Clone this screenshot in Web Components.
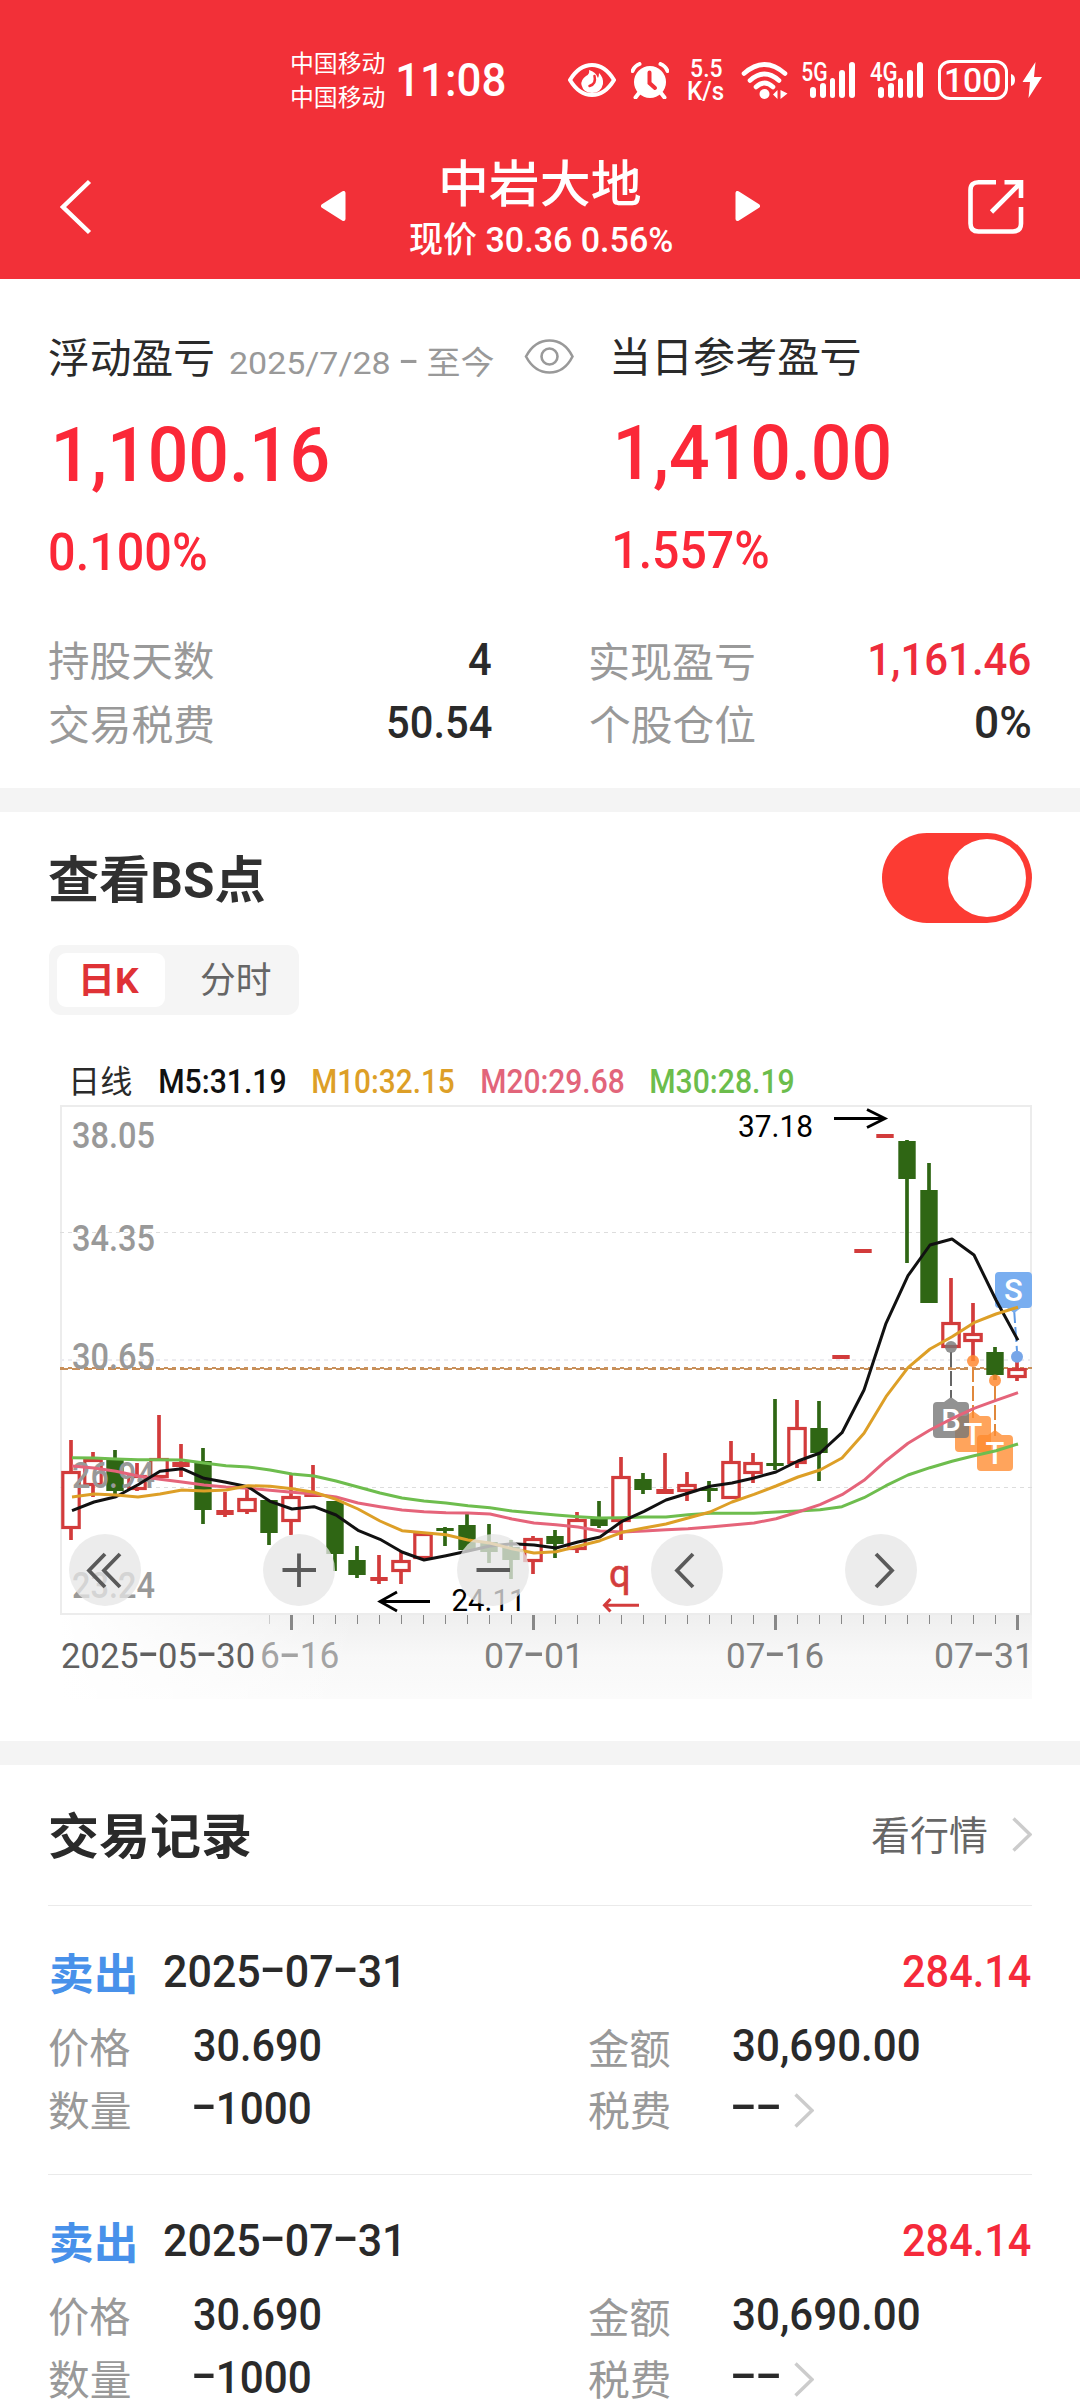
<!DOCTYPE html>
<html lang="zh-CN">
<head>
<meta charset="utf-8">
<title>中岩大地</title>
<style>
html,body{margin:0;padding:0}
body{width:1080px;height:2400px;overflow:hidden;background:#fff;font-family:Roboto,"Noto Sans CJK SC",sans-serif;color:#2a2a2a}
</style>
</head>
<body>
<stock-page></stock-page>
<script>
const FAMILY = 'Roboto, "Noto Sans CJK SC", sans-serif';
const ctx = document.createElement('canvas').getContext('2d');
const DASH = 1.95;

function define(name, html, after) {
  const t = document.createElement('template');
  t.innerHTML = html;
  customElements.define(name, class extends HTMLElement {
    connectedCallback() {
      if (this.shadowRoot) return;
      const root = this.attachShadow({mode: 'open'});
      root.appendChild(t.content.cloneNode(true));
      if (after) after(this, root);
    }
  });
}

/* Text whose glyph box is exactly w by h pixels; commas and slashes may hang below it. */
define('fit-text', `
<style>
:host{display:block;flex:none;font-weight:400}
span{display:inline-block;white-space:nowrap;transform-origin:0 0}
::slotted(i){font-style:normal;font-weight:300;font-size:1.95em;line-height:0;vertical-align:-.12em}
</style><span><slot></slot></span>`, (el, root) => {
  const w = +el.getAttribute('w'), h = +el.getAttribute('h');
  const text = el.textContent.trim();
  const weight = getComputedStyle(el).fontWeight;
  const ref = (text === 'K/s' ? text : text.replace(/[-,/]/g, '')).trim() || '0';
  if (text.includes('-')) el.innerHTML = text.replace(/-/g, '<i>-</i>');
  ctx.font = `${weight} 100px ${FAMILY}`;
  let m = ctx.measureText(ref);
  const size = h / (m.actualBoundingBoxAscent + m.actualBoundingBoxDescent) * 100;
  const span = root.querySelector('span');
  el.style.width = w + 'px';
  el.style.height = h + 'px';
  span.style.fontSize = size + 'px';
  span.style.lineHeight = h + 'px';
  const adv = span.getBoundingClientRect().width;
  ctx.font = `${weight} ${size}px ${FAMILY}`;
  m = ctx.measureText(ref);
  const first = text[0], last = text[text.length - 1];
  const f = ctx.measureText(first), l = ctx.measureText(last);
  const lsb = -f.actualBoundingBoxLeft * (first === '-' ? DASH : 1);
  const rsb = (l.width - l.actualBoundingBoxRight) * (last === '-' ? DASH : 1);
  const s = w / (adv - lsb - rsb);
  const r = ctx.measureText('0');
  const A = Math.round(r.fontBoundingBoxAscent), D = Math.round(r.fontBoundingBoxDescent);
  const base = (h - (A + D)) / 2 + A;
  span.style.transform = `translate(${-lsb * s}px,${m.actualBoundingBoxAscent - base}px) scaleX(${s})`;
});

define('chevron-right', `
<style>:host{display:block;flex:none;width:20px;height:35px}svg{display:block}</style>
<svg width="20" height="35"><path d="M1.5 1.5L18 17.5L1.5 33.5" fill="none" stroke="#ccc" stroke-width="3.4"/></svg>`);

define('signal-bars', `
<style>
:host{display:flex;position:relative;align-items:flex-end;width:45px;height:36px;gap:4px;flex:none;justify-content:flex-end}
i{width:5.8px;border-radius:3px;background:#fff}
i:nth-of-type(1){height:11px}i:nth-of-type(2){height:15px}i:nth-of-type(3){height:20px}i:nth-of-type(4){height:28px}i:nth-of-type(5){height:36px}
::slotted(*){position:absolute;left:-8px;top:0}
</style><slot></slot><i></i><i></i><i></i><i></i><i></i>`);

define('status-bar', `
<style>
:host{display:flex;align-items:center;height:160px;padding-left:292px;box-sizing:border-box;color:#fff}
.col{display:flex;flex-direction:column;flex:none}
svg{display:block;flex:none}
fit-text{font-weight:500}
.bat{display:flex;align-items:center;justify-content:center;width:70px;height:40px;border:3px solid #fff;border-radius:12px;box-sizing:border-box;flex:none}
</style>
<div class="col" style="gap:12px;margin-top:-3px"><fit-text w="93" h="22" style="font-weight:400">中国移动</fit-text><fit-text w="93" h="22" style="font-weight:400">中国移动</fit-text></div>
<fit-text w="107" h="34.5" style="margin-left:13px">11:08</fit-text>
<svg width="48" height="34" viewBox="0 0 48 34" style="margin-left:63px"><path d="M2 17Q11 2 24 2Q37 2 46 17Q37 32 24 32Q11 32 2 17Z" fill="none" stroke="#fff" stroke-width="4"/><path d="M21 7Q22 11 18 13Q12.500 17 13.500 22Q15.500 30 24 30Q33 30 35 21Q35.500 14 31 10Q31 13 30 15Q28 9 21 7Z" fill="#fff"/><path d="M26.500 13Q28.500 21 21.500 23" fill="none" stroke="#f23038" stroke-width="2.500" stroke-linecap="round"/></svg>
<svg width="38" height="37" viewBox="0 0 38 37" style="margin-left:15px"><circle cx="19" cy="20" r="16" fill="#fff"/><path d="M1.5 9Q3.500 4 8.500 2M36.500 9Q34.500 4 29.500 2M8 31L4.500 35.500M30 31L33.500 35.500" stroke="#fff" stroke-width="4" stroke-linecap="round" fill="none"/><path d="M18.500 10.500V21L24 26" stroke="#f23038" stroke-width="4" stroke-linecap="round" fill="none"/></svg>
<div class="col" style="margin-left:19px;gap:3px;align-items:center"><fit-text w="31" h="18.500">5.5</fit-text><fit-text w="36" h="20">K/s</fit-text></div>
<svg width="47" height="37" viewBox="0 0 47 37" style="margin-left:17px"><g fill="none" stroke="#fff" stroke-width="4.600" stroke-linecap="round"><path d="M3 11.500Q23.500 -6.500 44 11.500"/><path d="M9 18.500Q23.500 5.500 38 18.500"/><path d="M15 25Q23.500 17 32 25"/></g><circle cx="23.500" cy="32" r="5" fill="#fff"/><path d="M36.500 28L32 32.500L36.500 37zM39.500 28l7 3.500l-7 5.500z" fill="#fff"/></svg>
<signal-bars style="margin-left:22px"><fit-text w="25" h="19">5G</fit-text></signal-bars>
<signal-bars style="margin-left:23px"><fit-text w="27" h="19">4G</fit-text></signal-bars>
<div class="bat" style="margin-left:15px"><fit-text w="54" h="24">100</fit-text></div>
<svg width="35" height="38" viewBox="0 0 35 38" style="margin-left:3px"><path d="M0 13Q4 14 4 19Q4 24 0 25Z" fill="#fff"/><path d="M24.500 1L11.500 21H19L17.500 37L31 16H23Z" fill="#fff"/></svg>`);

define('nav-bar', `
<style>
:host{display:flex;height:119px;box-sizing:border-box;padding:0 57px 0 60px;color:#fff}
svg{display:block;flex:none}
.t{display:flex;flex-direction:column;align-items:center;width:262px;margin-left:64px;margin-top:-1px}
fit-text{font-weight:500}
</style>
<svg width="32" height="56" style="margin-top:19px"><path d="M29.500 2.500L3 28L29.500 53.500" fill="none" stroke="#fff" stroke-width="4.500"/></svg>
<svg width="25" height="30" style="margin-left:229px;margin-top:31px"><path d="M22.500 2V28L2 15Z" fill="#fff" stroke="#fff" stroke-width="4" stroke-linejoin="round"/></svg>
<div class="t"><fit-text w="198" h="48">中岩大地</fit-text><fit-text w="262" h="34" style="margin-top:15px">现价 30.36 0.56%</fit-text></div>
<svg width="25" height="30" style="margin-left:63px;margin-top:31px"><path d="M2.500 2V28L23 15Z" fill="#fff" stroke="#fff" stroke-width="4" stroke-linejoin="round"/></svg>
<svg width="56" height="56" style="margin-left:208px;margin-top:19px"><path d="M28 3.300H10.500Q2.500 3.300 2.500 11V44.500Q2.500 52.500 10.500 52.500H45Q53 52.500 53 44.500V28M36.500 3.300H53V19M52 4.500L23.500 33" fill="none" stroke="#fff" stroke-width="4.600"/></svg>`);

define('stat-pair', `
<style>
:host{display:flex;justify-content:space-between;height:63px}
::slotted([slot=label]){color:#999}
::slotted([slot=value]){font-weight:500;margin-top:2px}
</style><slot name="label"></slot><slot name="value"></slot>`);

define('profit-summary', `
<style>
:host{display:block;height:509px;box-sizing:border-box;padding:57px 49px 0}
.cols{display:flex;height:304.500px}
.l{width:564px}.r{flex:1}
.h{display:flex;align-items:flex-start;height:90px}
.red{color:#fb2838;font-weight:500}
.grid{display:grid;grid-template-columns:442px 440px;column-gap:99px}
</style>
<div class="cols">
 <div class="l"><div class="h"><fit-text w="164" h="38.500" style="margin-top:1.500px">浮动盈亏</fit-text><fit-text w="264" h="30" style="margin:9.500px 0 0 17px;color:#999">2025/7/28 - 至今</fit-text>
 <svg width="50" height="38" style="margin-left:30px;margin-top:2px"><path d="M2 18.500Q10.500 2.500 25.500 2.500Q40.500 2.500 48.500 18.500Q40.500 34.500 25.500 34.500Q10.500 34.500 2 18.500Z" fill="none" stroke="#999" stroke-width="2.600"/><circle cx="25.500" cy="18.500" r="8" fill="none" stroke="#999" stroke-width="2.600"/></svg></div>
 <fit-text class="red" w="272" h="56.500" style="margin-left:7px">1,100.16</fit-text><fit-text class="red" w="156" h="38" style="margin:49.500px 0 0 1px">0.100%</fit-text></div>
 <div class="r"><div class="h" style="height:87.500px"><fit-text w="247" h="39">当日参考盈亏</fit-text></div>
 <fit-text class="red" w="271" h="56.500" style="margin-left:4.500px">1,410.00</fit-text><fit-text class="red" w="153" h="38" style="margin:49.500px 0 0 2px">1.557%</fit-text></div>
</div>
<div class="grid">
 <stat-pair><fit-text slot="label" w="164.500" h="38.500">持股天数</fit-text><fit-text slot="value" w="22.500" h="32">4</fit-text></stat-pair>
 <stat-pair><fit-text slot="label" w="164.500" h="38.500">实现盈亏</fit-text><fit-text slot="value" w="160" h="32.500" style="color:#ee2c3c">1,161.46</fit-text></stat-pair>
 <stat-pair><fit-text slot="label" w="164.500" h="38.500">交易税费</fit-text><fit-text slot="value" w="103.500" h="32.500">50.54</fit-text></stat-pair>
 <stat-pair><fit-text slot="label" w="164.500" h="38.500">个股仓位</fit-text><fit-text slot="value" w="54" h="33">0%</fit-text></stat-pair>
</div>`);

define('toggle-switch', `
<style>:host{display:flex;justify-content:flex-end;align-items:center;width:150px;height:90px;margin-top:1px;border-radius:45px;background:#fc3b33;box-sizing:border-box;padding-right:6px}
b{width:78px;height:78px;border-radius:50%;background:#fff}</style><b></b>`);

define('segment-tabs', `
<style>:host{display:flex;width:250px;height:70px;box-sizing:border-box;padding:8px;background:#f5f5f5;border-radius:12px}
div{display:flex;flex:none;align-items:center;justify-content:center;width:108px;height:54px;border-radius:9px}
.on{background:#fff;color:#df3236;font-weight:700}.on fit-text{font-weight:700}
.off{width:142px;color:#666}</style>
<div class="on"><fit-text w="57" h="32">日K</fit-text></div><div class="off"><fit-text w="69.500" h="33.500">分时</fit-text></div>`);

/* One row per trading day: up flag, high, body top, body bottom, low. */
const K = [[1,335,366,424,435],[1,347,354,381,392],[0,345,355,386,389],[1,358,370,385,386],[1,310,353,373,373],[1,339,357,362,372],[0,343,356,405,419],[1,387,405,410,412],[1,383,393,407,409],[0,395,395,428,440],[1,370,391,417,430],[1,360,389,392,392],[0,396,396,449,466],[0,441,455,470,473],[1,450,472,476,479],[1,447,455,467,479],[1,428,428,454,454],[0,422,423,426,441],[0,409,420,445,447],[0,419,437,447,458],[0,435,442,455,474],[1,431,433,457,469],[0,425,431,439,453],[1,407,414,445,448],[0,396,412,421,423],[1,352,371,417,435],[0,368,374,385,389],[1,348,384,389,389],[1,367,379,387,396],[0,376,383,386,397],[1,336,356,394,394],[1,348,357,369,378],[0,294,358,361,365],[1,295,322,359,363],[0,296,323,348,376],[1,250,250,254,254],[1,144,144,148,148],[1,29,29,33,33],[0,35,36,74,158],[0,58,85,198,198],[1,173,217,243,243],[1,198,228,237,256],[0,242,247,270,275],[1,252,263,273,276]];
const MA = {
 '#6ebd4e':[352.7,353,354,354.7,354.7,355,358,360.7,362,365,369,371,376,382,388,393,396,398,400.7,402.7,406,408,410,411.7,413,412.7,412,412,409.7,408.3,408.3,408.3,407,406,404.7,401.7,392.7,380.7,370,362.7,356.3,350.7,345.7,339],
 '#e5647a':[361,363,366.3,371,374.3,377,380,382,383.3,385.3,387.3,389,392,398,401.7,405,406.7,407.7,408,409,414,418,419.7,422,426,427,426,424.7,423.7,422,420,418,413.7,407,399.7,389.7,375.3,355.7,338.3,325,313.7,303.3,295.3,287.7],
 '#111':[405.7,397,391.7,379.7,366.3,363.7,373.3,377.3,381.7,396.3,404,401.7,410,425.3,434.3,447,455,450.7,446,441,438.7,440,443,437,432,416.3,406.3,395,388.3,381.3,378,373,367,356,348,327.7,285,218.3,170.7,140,134,150,195,235.3],
 '#dd9f27':[392,389,390,392,389,385,386,385,380.7,381.3,383.7,387.3,394.3,404,416,425.7,427.7,429.7,435,438,443.7,448,446.7,441.3,435.7,427.3,423,419,413,407,397,389.3,381,372,365,353,328.3,291.7,262.7,244,231.7,217.7,209,202.3]};

define('k-chart', `
<style>:host{display:block;width:972px;height:510px}svg{display:block;overflow:visible;font-family:Roboto,"Noto Sans CJK SC",sans-serif}</style>
<svg width="972" height="510" viewBox="0 0 972 510">
<rect x="1" y="1" width="970" height="508" fill="#fff" stroke="#ececec" stroke-width="2"/>
<g stroke="#ddd" stroke-dasharray="4 4"><path d="M0 127.500H972M0 382.500H972"/><path d="M0 255H972" stroke="#ececf0" stroke-width="2"/></g>
<path d="M0 263H972" stroke="#c8905a" stroke-width="2" stroke-dasharray="4 4"/><path d="M0 264H972" stroke="#c8905a" stroke-width="2" stroke-dasharray="8 4"/>
<g id="k"></g>
<g font-size="36.500" font-weight="500" fill="#999">
<text x="12" y="43.300" textLength="83" lengthAdjust="spacingAndGlyphs">38.05</text><text x="12" y="145.500" textLength="83" lengthAdjust="spacingAndGlyphs">34.35</text><text x="12" y="263.500" textLength="83" lengthAdjust="spacingAndGlyphs">30.65</text><text x="12" y="383" textLength="83" lengthAdjust="spacingAndGlyphs">26.94</text><text x="12" y="492.500" textLength="83" lengthAdjust="spacingAndGlyphs">23.24</text></g>
<g font-size="31.500" fill="#000"><text x="678" y="31.500" textLength="75" lengthAdjust="spacingAndGlyphs">37.18</text><text x="391.500" y="506" textLength="74" lengthAdjust="spacingAndGlyphs">24.11</text></g>
<path d="M774 13.500H825M807 4.500L825 13.500L807 22.500M370 496.500H320M337 487L320 496.500L337 506" fill="none" stroke="#000" stroke-width="2.800"/>
<text x="549" y="482" font-size="38" fill="#d33c3c" stroke="#d33c3c" stroke-width=".6">q</text><path d="M579 500.300H545M550.500 494L544.500 500.300L550.500 506.500" fill="none" stroke="#d33c3c" stroke-width="3"/>
<g fill="none" stroke-width="2" stroke-dasharray="15 4"><path d="M954 203L957 246" stroke="#5f9be6"/><path d="M891 247V293" stroke="#666"/><path d="M913 262V313M935 281V331" stroke="#e0883c"/></g>
<circle cx="957" cy="251.700" r="6" fill="#77a6e8"/><circle cx="891" cy="242" r="6" fill="#777" fill-opacity=".8"/><circle cx="913" cy="256" r="6" fill="#ff8a32" fill-opacity=".85"/><circle cx="935" cy="275.500" r="6" fill="#ff8a32" fill-opacity=".85"/>
<g text-anchor="middle" font-size="31" font-weight="500"><g fill="#ff8a2e" fill-opacity=".78"><path d="M899 311H906L913 306L920 311H927Q931 311 931 315V343Q931 347 927 347H899Q895 347 895 343V315Q895 311 899 311Z"/><path d="M921 330H928L935 325L942 330H949Q953 330 953 334V362Q953 366 949 366H921Q917 366 917 362V334Q917 330 921 330Z"/></g>
<path d="M877 297H884L891 292L898 297H905Q909 297 909 301V329Q909 333 905 333H877Q873 333 873 329V301Q873 297 877 297Z" fill="#777" fill-opacity=".8"/>
<path d="M939 167H968Q972 167 972 171V199Q972 203 968 203H961L954 208L947 203H939Q935 203 935 199V171Q935 167 939 167Z" fill="#79aef0"/>
<g fill="#fff"><text x="953.500" y="196">S</text><text x="891" y="326">B</text><text x="913" y="340">T</text><text x="935" y="359">T</text></g></g>
<g id="ma"></g>
</svg>`, (el, root) => {
  root.getElementById('k').innerHTML = K.map(([up, h, t, b, l], i) => {
    const x = 11 + 22 * i, c = up ? '#d23b3b' : '#2f6614';
    let s = '';
    if (h < t) s += `<path d="M${x} ${h}V${t}" stroke="${c}" stroke-width="3.700"/>`;
    if (l > b) s += `<path d="M${x} ${b}V${l}" stroke="${c}" stroke-width="3.700"/>`;
    if (!up || b - t < 6) s += `<rect x="${x - 8.7}" y="${t}" width="17.400" height="${b - t}" fill="${c}"/>`;
    else s += `<rect x="${x - 8.2}" y="${t + 1.5}" width="16.400" height="${b - t - 3}" fill="#fff" stroke="${c}" stroke-width="3.200"/>`;
    return s;
  }).join('');
  root.getElementById('ma').innerHTML = Object.entries(MA).map(([c, v]) =>
    `<polyline fill="none" stroke="${c}" stroke-width="3" stroke-linejoin="round" points="${v.map((y, i) => (12 + 22 * i) + ',' + y).join(' ')}"/>`).join('');
});

define('round-button', `
<style>:host{display:flex;width:72px;height:72px;border-radius:50%;background:rgba(230,230,230,.76)}</style>
<svg width="72" height="72"><path fill="none" stroke="#5a5a5a" stroke-width="3.800"/></svg>`, (el, root) => {
  root.querySelector('path').setAttribute('d', {
    first: 'M36 20L20 36.500L36 53M51 20L35 36.500L51 53', plus: 'M19.500 36H53M36 19.500V53', minus: 'M19.500 36H53',
    prev: 'M42 20L26 36.500L42 53', next: 'M31 20L47 36.500L31 53'}[el.getAttribute('icon')]);
});

define('time-axis', `
<style>
:host{display:flex;flex-direction:column;width:972px;height:84px;background:linear-gradient(90deg,#fff,rgba(255,255,255,0) 300px),linear-gradient(#efefef,#f8f8f8 50%,#fbfbfb)}
svg{display:block;flex:none}
.r{display:flex;margin-top:12.500px;padding-left:2px;color:#808080}
.fade{opacity:.7}
fit-text{font-weight:400}
</style>
<svg width="972" height="15"><path d="M209.500 0V9" stroke="#ccc"/><path id="a" stroke="#888" stroke-width="1"/><path id="b" stroke="#888" stroke-width="3"/></svg>
<div class="r"><fit-text w="192" h="26.500" style="color:#606060">2025-05-30</fit-text><fit-text class="fade" w="76" h="26.500" style="margin-left:8px">6-16</fit-text><fit-text w="91" h="26.500" style="margin-left:148px">07-01</fit-text><fit-text w="95" h="26.500" style="margin-left:151px">07-16</fit-text><fit-text w="91" h="26.500" style="margin-left:113px">07-31</fit-text></div>`, (el, root) => {
  let a = '', b = '';
  for (let i = 10; i < 44; i++) {
    const x = 11.5 + 22 * i;
    if (i % 11 === 10) b += `M${x} 0V15`; else a += `M${x} 0V9`;
  }
  root.getElementById('a').setAttribute('d', a);
  root.getElementById('b').setAttribute('d', b);
});

define('chart-section', `
<style>
:host{display:block;height:929px;box-sizing:border-box;padding:20px 48px 0 49px}
.head{display:flex;justify-content:space-between;height:113px}
.legend{display:flex;height:40px;margin-top:50px;padding-left:24px;align-items:flex-start}
.legend fit-text{font-weight:500;margin-top:5px}
.plot{position:relative;margin-left:11px}
.btns{position:absolute;left:9px;top:429px;display:flex;gap:122px}
</style>
<div class="head"><fit-text w="215" h="47.500" style="font-weight:700;color:#303030;margin-top:23.500px">查看BS点</fit-text><toggle-switch></toggle-switch></div>
<segment-tabs></segment-tabs>
<div class="legend"><fit-text w="59" h="30" style="margin-top:0;font-weight:400">日线</fit-text><fit-text w="125" h="24.500" style="margin-left:28px;color:#111">M5:31.19</fit-text><fit-text w="141" h="24.500" style="margin-left:27.500px;color:#dd9f27">M10:32.15</fit-text><fit-text w="142" h="24.500" style="margin-left:28px;color:#e2657a">M20:29.68</fit-text><fit-text w="142" h="24.500" style="margin-left:27px;color:#6cbd4c">M30:28.19</fit-text></div>
<div class="plot"><k-chart></k-chart><time-axis></time-axis>
<div class="btns"><round-button icon="first"></round-button><round-button icon="plus"></round-button><round-button icon="minus"></round-button><round-button icon="prev"></round-button><round-button icon="next"></round-button></div></div>`);

define('trade-item', `
<style>
:host{display:block;height:269px;box-sizing:border-box;border-top:1px solid #eaeaea;padding:46px 1px 0}
.top{display:flex;height:75.500px}
.side{color:#4891ea;font-weight:700;margin-left:1.500px}
fit-text{font-weight:500}
.g{display:grid;grid-template-columns:145px 395px 144px auto;grid-auto-rows:63.300px}
.k{color:#999;font-weight:400}
.v{margin-top:1px}
.f{display:flex}
</style>
<div class="top"><fit-text class="side" w="83.500" h="42" style="font-weight:700">卖出</fit-text><fit-text w="234.500" h="33" style="margin:2.500px 0 0 29.500px">2025-07-31</fit-text><fit-text w="128" h="33" style="margin:2.500px 0 0 auto;color:#f52a3b">284.14</fit-text></div>
<div class="g">
<fit-text class="k" w="81" h="39">价格</fit-text><fit-text class="v" w="126.500" h="33.500">30.690</fit-text><fit-text class="k" w="81" h="39">金额</fit-text><fit-text class="v" w="186" h="33.500">30,690.00</fit-text>
<fit-text class="k" w="81" h="39">数量</fit-text><fit-text class="v" w="116.500" h="33">-1000</fit-text><fit-text class="k" w="81" h="39">税费</fit-text><div class="f"><fit-text class="v" w="46" h="33">--</fit-text><chevron-right style="margin:2px 0 0 15px"></chevron-right></div>
</div>`);

define('trade-records', `
<style>
:host{display:block;padding:0 48px}
.head{display:flex;height:140px;align-items:flex-start}
.head fit-text{color:#666}
</style>
<div class="head"><fit-text w="200" h="48" style="margin:46px 0 0 2px;font-weight:700;color:#2a2a2a">交易记录</fit-text><fit-text w="114.500" h="37" style="margin:51px 26px 0 auto">看行情</fit-text><chevron-right style="margin-top:52px"></chevron-right></div>
<trade-item></trade-item><trade-item></trade-item>`);

define('stock-page', `
<style>:host{display:block;width:1080px;height:2400px;overflow:hidden;background:#fff}
header{background:#f23038;height:279px}hr{border:0;margin:0;height:24px;background:#f4f4f4}</style>
<header><status-bar></status-bar><nav-bar></nav-bar></header>
<profit-summary></profit-summary><hr><chart-section></chart-section><hr><trade-records></trade-records>`);
</script>
</body>
</html>
